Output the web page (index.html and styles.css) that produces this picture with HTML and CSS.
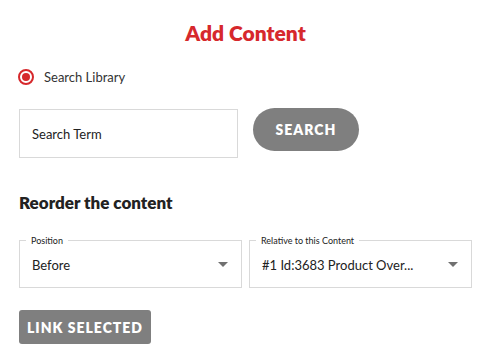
FILE: index.html
```html
<!DOCTYPE html>
<html lang="en">
<head>
<meta charset="utf-8">
<title>Add Content</title>
<link rel="stylesheet" href="styles.css">
</head>
<body>
<main class="panel">
  <h1 class="title">Add Content</h1>

  <label class="radio-row">
    <span class="radio"><span class="radio-dot"></span></span>
    <span class="radio-label">Search Library</span>
  </label>

  <div class="search-row">
    <div class="search-input">Search Term</div>
    <button class="btn-pill" type="button">SEARCH</button>
  </div>

  <h2 class="subtitle">Reorder the content</h2>

  <div class="select-row">
    <fieldset class="select">
      <legend class="select-legend">Position</legend>
      <div class="select-value">
        <span>Before</span>
        <span class="caret"></span>
      </div>
    </fieldset>
    <fieldset class="select">
      <legend class="select-legend">Relative to this Content</legend>
      <div class="select-value">
        <span>#1 Id:3683 Product Over...</span>
        <span class="caret"></span>
      </div>
    </fieldset>
  </div>

  <button class="btn-rect" type="button">LINK SELECTED</button>
</main>
</body>
</html>
```

FILE: styles.css
```css
* { box-sizing: border-box; }

html, body {
  margin: 0;
  background: #ffffff;
}

body {
  font-family: Lato, "Open Sans", "Liberation Sans", sans-serif;
  color: #222222;
}

.panel {
  width: 480px;
  padding: 0 8px 0 19px;
  display: flex;
  flex-direction: column;
  align-items: flex-start;
}

.title {
  align-self: stretch;
  text-align: center;
  margin: 20px 0 0;
  font-size: 21px;
  line-height: 26px;
  font-weight: 800;
  color: #d6282c;
}

.radio-row {
  display: flex;
  align-items: center;
  gap: 10px;
  margin-top: 23px;
  margin-left: -1px;
}

.radio {
  width: 16px;
  height: 16px;
  border: 2px solid #d6282c;
  border-radius: 50%;
  display: flex;
  align-items: center;
  justify-content: center;
}

.radio-dot {
  width: 8px;
  height: 8px;
  border-radius: 50%;
  background: #d6282c;
}

.radio-label {
  font-size: 13px;
  line-height: 16px;
  color: #333333;
}

.search-row {
  display: flex;
  align-items: flex-start;
  gap: 15px;
  margin-top: 24px;
}

.search-input {
  width: 219px;
  height: 49px;
  border: 1px solid #d9d9d9;
  padding: 0 12px;
  display: flex;
  align-items: center;
  font-size: 13px;
  color: #222222;
}

.btn-pill {
  margin-top: -1px;
  width: 106px;
  height: 43px;
  border: none;
  border-radius: 22px;
  background: #7f7f7f;
  color: #ffffff;
  font-family: inherit;
  font-size: 14px;
  font-weight: 800;
  letter-spacing: 1px;
  cursor: pointer;
}

.subtitle {
  margin: 34px 0 0;
  font-size: 17px;
  line-height: 22px;
  font-weight: 800;
  color: #222222;
}

.select-row {
  align-self: stretch;
  display: flex;
  gap: 7px;
  margin-top: 21px;
}

.select {
  flex: 1;
  min-width: 0;
  margin: 0;
  padding: 0 6px 2px;
  border: 1px solid #d9d9d9;
}

.select-legend {
  padding: 0 5px;
  font-size: 9px;
  line-height: 11px;
  color: #222222;
}

.select-value {
  height: 39px;
  display: flex;
  align-items: center;
  justify-content: space-between;
  padding: 0 7px 2px 6px;
  font-size: 13px;
  color: #222222;
}

.caret {
  width: 0;
  height: 0;
  border-left: 5px solid transparent;
  border-right: 5px solid transparent;
  border-top: 5px solid #707070;
}

.btn-rect {
  margin-top: 22px;
  width: 132px;
  height: 34px;
  border: none;
  border-radius: 3px;
  background: #7f7f7f;
  color: #ffffff;
  font-family: inherit;
  font-size: 14px;
  font-weight: 800;
  letter-spacing: 1px;
  cursor: pointer;
}
```
